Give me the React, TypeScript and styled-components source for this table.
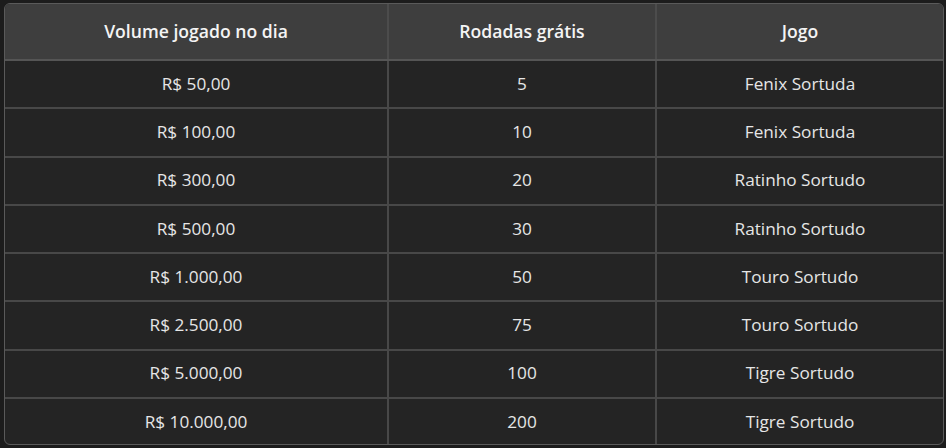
import styled, { createGlobalStyle } from 'styled-components';

const rows = [
    ['R$ 50,00', '5', 'Fenix Sortuda'],
    ['R$ 100,00', '10', 'Fenix Sortuda'],
    ['R$ 300,00', '20', 'Ratinho Sortudo'],
    ['R$ 500,00', '30', 'Ratinho Sortudo'],
    ['R$ 1.000,00', '50', 'Touro Sortudo'],
    ['R$ 2.500,00', '75', 'Touro Sortudo'],
    ['R$ 5.000,00', '100', 'Tigre Sortudo'],
    ['R$ 10.000,00', '200', 'Tigre Sortudo'],
];

const App = () => (
    <>
        <GlobalStyle />
        <Page>
            <Wrap>
                <Table>
                    <colgroup>
                        <col style={{ width: 383 }} />
                        <col style={{ width: 268 }} />
                        <col />
                    </colgroup>
                    <thead>
                        <tr>
                            <Th>Volume jogado no dia</Th>
                            <Th>Rodadas grátis</Th>
                            <Th>Jogo</Th>
                        </tr>
                    </thead>
                    <tbody>
                        {rows.map((r) => (
                            <tr key={r[0]}>
                                {r.map((c, i) => (
                                    <Td key={i}>{c}</Td>
                                ))}
                            </tr>
                        ))}
                    </tbody>
                </Table>
            </Wrap>
        </Page>
    </>
);

export default App;

/*
 * Styled declarations
 */
const GlobalStyle = createGlobalStyle`
    html, body {
        margin: 0;
        background: #1c1c1c;
    }
`;

const Page = styled.div`
    padding: 3px 2px 3px 4px;
    font-family: 'Open Sans', 'Noto Sans', sans-serif;
`;

const Wrap = styled.div`
    width: 940px;
    height: 442px;
    box-sizing: border-box;
    border: 1px solid #5a5a5a;
    border-radius: 6px;
    overflow: hidden;
    background: #242424;
`;

const Table = styled.table`
    width: 100%;
    border-collapse: collapse;
    table-layout: fixed;
`;

const Th = styled.th`
    height: 55px;
    padding: 0;
    line-height: 1.2;
    background: #3e3e3e;
    color: #f4f4f4;
    font-size: 17.6px;
    font-weight: 600;
    text-align: center;
    border-left: 2px solid #4c4c4c;
    border-bottom: 2px solid #555;

    &:first-child {
        border-left: none;
    }
`;

const Td = styled.td`
    height: 46.25px;
    padding: 0;
    line-height: 1.2;
    color: #e6e6e6;
    font-size: 17.2px;
    text-align: center;
    border-left: 2px solid #484848;
    border-top: 2px solid #484848;

    &:first-child {
        border-left: none;
    }

    tr:first-child > & {
        border-top: none;
    }
`;
